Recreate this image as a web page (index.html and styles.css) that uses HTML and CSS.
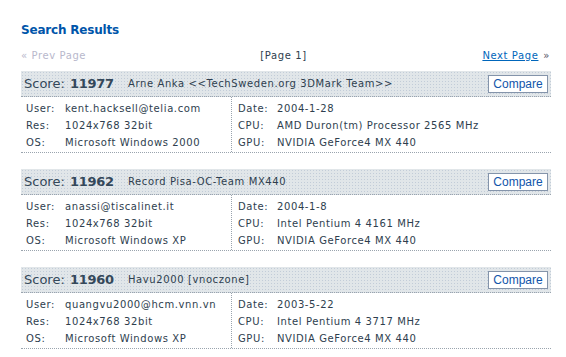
FILE: index.html
```html
<!DOCTYPE html>
<html lang="en">
<head>
    <meta charset="UTF-8">
    <title>Search Results</title>
    <link rel="stylesheet" href="styles.css">
</head>
<body>
    <div class="results">
        <h1 class="title">Search Results</h1>

        <div class="pager">
            <span class="prev">&laquo; Prev Page</span>
            <span class="current">[Page 1]</span>
            <span class="next"><a href="#">Next Page</a> <span class="arrow">&raquo;</span></span>
        </div>

        <div class="card">
            <div class="card-head">
                <span class="score">Score: <b>11977</b></span>
                <span class="name">Arne Anka &lt;&lt;TechSweden.org 3DMark Team&gt;&gt;</span>
                <button class="compare">Compare</button>
            </div>
            <div class="card-body">
                <div class="col left">
                    <div class="row"><span class="label">User:</span>kent.hacksell@telia.com</div>
                    <div class="row"><span class="label">Res:</span>1024x768 32bit</div>
                    <div class="row"><span class="label">OS:</span>Microsoft Windows 2000</div>
                </div>
                <div class="col right">
                    <div class="row"><span class="label">Date:</span>2004-1-28</div>
                    <div class="row"><span class="label">CPU:</span>AMD Duron(tm) Processor 2565 MHz</div>
                    <div class="row"><span class="label">GPU:</span>NVIDIA GeForce4 MX 440</div>
                </div>
            </div>
        </div>

        <div class="card">
            <div class="card-head">
                <span class="score">Score: <b>11962</b></span>
                <span class="name">Record Pisa-OC-Team MX440</span>
                <button class="compare">Compare</button>
            </div>
            <div class="card-body">
                <div class="col left">
                    <div class="row"><span class="label">User:</span>anassi@tiscalinet.it</div>
                    <div class="row"><span class="label">Res:</span>1024x768 32bit</div>
                    <div class="row"><span class="label">OS:</span>Microsoft Windows XP</div>
                </div>
                <div class="col right">
                    <div class="row"><span class="label">Date:</span>2004-1-8</div>
                    <div class="row"><span class="label">CPU:</span>Intel Pentium 4 4161 MHz</div>
                    <div class="row"><span class="label">GPU:</span>NVIDIA GeForce4 MX 440</div>
                </div>
            </div>
        </div>

        <div class="card">
            <div class="card-head">
                <span class="score">Score: <b>11960</b></span>
                <span class="name">Havu2000 [vnoczone]</span>
                <button class="compare">Compare</button>
            </div>
            <div class="card-body">
                <div class="col left">
                    <div class="row"><span class="label">User:</span>quangvu2000@hcm.vnn.vn</div>
                    <div class="row"><span class="label">Res:</span>1024x768 32bit</div>
                    <div class="row"><span class="label">OS:</span>Microsoft Windows XP</div>
                </div>
                <div class="col right">
                    <div class="row"><span class="label">Date:</span>2003-5-22</div>
                    <div class="row"><span class="label">CPU:</span>Intel Pentium 4 3717 MHz</div>
                    <div class="row"><span class="label">GPU:</span>NVIDIA GeForce4 MX 440</div>
                </div>
            </div>
        </div>
    </div>
</body>
</html>
```

FILE: styles.css
```css
* { box-sizing: border-box; }
body {
    margin: 0;
    background: #ffffff;
    font-family: "DejaVu Sans", Verdana, sans-serif;
    color: #2e3e4e;
}
.results {
    width: 530px;
    margin-left: 21px;
}
.title {
    margin: 0;
    padding-top: 22px;
    font-size: 12px;
    line-height: 16px;
    font-weight: bold;
    letter-spacing: -0.2px;
    color: #0055aa;
}
.pager {
    display: flex;
    justify-content: space-between;
    align-items: center;
    height: 18px;
    margin-top: 8px;
    margin-bottom: 7px;
    font-size: 10px;
    letter-spacing: 0.6px;
}
.prev {
    width: 140px;
    color: #b8b8cc;
}
.current {
    color: #2e3e4e;
    margin-left: -5px;
}
.next {
    width: 140px;
    text-align: right;
    padding-right: 1px;
}
.next a {
    color: #0066bb;
    text-decoration: underline;
}
.arrow {
    color: #556;
    margin-left: 1px;
}
.card {
    margin-bottom: 16px;
}
.card-head {
    display: flex;
    align-items: center;
    height: 26px;
    padding: 0 3px;
    background-color: #e1e6e9;
    background-image: radial-gradient(circle, #c2ccd8 0.7px, transparent 0.9px);
    background-size: 3px 3px;
    border-bottom: 1px dotted #9aa4ae;
}
.score {
    font-size: 13px;
    color: #34485a;
    width: 104px;
}
.score b {
    margin-left: 1px;
    letter-spacing: -0.3px;
}
.name {
    flex: 1;
    font-size: 10px;
    letter-spacing: 0.6px;
    color: #2e3e4e;
}
.compare {
    width: 60px;
    height: 18px;
    padding: 0;
    background: #ffffff;
    border: 1px solid #8494aa;
    font-family: "Liberation Sans", Arial, sans-serif;
    font-size: 12px;
    color: #1155aa;
}
.card-body {
    display: grid;
    grid-template-columns: 211px 1fr;
    border-bottom: 1px dotted #9aa4ae;
}
.col {
    padding: 3px 0 1px;
}
.left {
    padding-left: 5px;
    border-right: 1px dotted #9aa4ae;
}
.right {
    padding-left: 6px;
}
.row {
    height: 17px;
    line-height: 17px;
    font-size: 10px;
    letter-spacing: 0.6px;
    white-space: nowrap;
}
.label {
    display: inline-block;
    width: 39px;
}
```
